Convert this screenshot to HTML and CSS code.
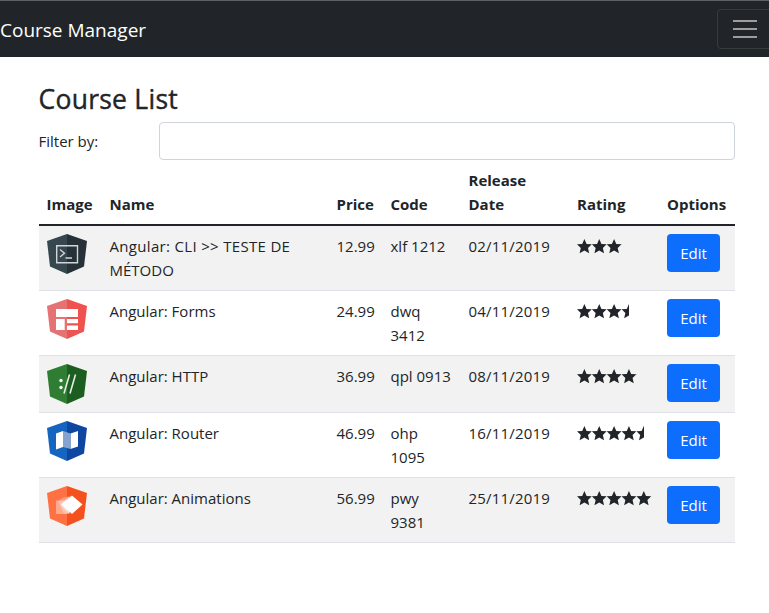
FILE: index.html
```html
<!DOCTYPE html>
<html lang="en">
<head>
<meta charset="utf-8">
<title>Course Manager</title>
<link rel="stylesheet" href="styles.css">
</head>
<body>
<svg width="0" height="0" class="defs" aria-hidden="true">
  <defs>
    <path id="star" d="M7.4 0 9.600 4.900 14.800 5.300 11 8.900 12.200 14.200 7.400 11.600 2.600 14.200 3.800 8.900 0 5.300 5.200 4.900Z"/>
    <g id="stars">
      <use href="#star"/><use href="#star" x="14.85"/><use href="#star" x="29.7"/><use href="#star" x="44.55"/><use href="#star" x="59.4"/>
    </g>
    <path id="left" d="M20 0 0 7 3 32.500 20 40Z"/>
    <path id="right" d="M20 0 40 7 37 32.500 20 40Z"/>
  </defs>
</svg>
<nav class="navbar">
  <a class="brand">Course Manager</a>
  <button class="toggler" aria-label="Menu"><span></span><span></span><span></span></button>
</nav>
<main class="container">
  <h3 class="title">Course List</h3>
  <div class="filter">
    <label for="filter">Filter by:</label>
    <input id="filter" type="text">
  </div>
  <table class="table">
    <colgroup><col class="c-image"><col class="c-name"><col class="c-price"><col class="c-code"><col class="c-date"><col class="c-rating"><col class="c-options"></colgroup>
    <thead>
      <tr><th>Image</th><th>Name</th><th>Price</th><th>Code</th><th>Release<br>Date</th><th>Rating</th><th>Options</th></tr>
    </thead>
    <tbody>
      <tr>
        <td><svg class="logo" viewBox="0 0 40 40"><use href="#left" fill="#37474f"/><use href="#right" fill="#263238"/><path d="M9.700 11.700h20.800v17H9.700z" fill="none" stroke="#d3d6d8" stroke-width="1.4"/><path d="m13 15.500 4.500 3.700-4.500 3.700M18.500 24h6.500" fill="none" stroke="#d3d6d8" stroke-width="1.300"/></svg></td>
        <td><span class="wide">Angular: CLI &gt;&gt; TESTE DE</span><br>MÉTODO</td><td>12.99</td><td>xlf 1212</td><td class="date">02/11/2019</td>
        <td><div class="stars s30"><svg viewBox="0 0 75 15"><use href="#stars"/></svg></div></td>
        <td><button class="btn">Edit</button></td>
      </tr>
      <tr>
        <td><svg class="logo" viewBox="0 0 40 40"><use href="#left" fill="#e57373"/><use href="#right" fill="#ef5350"/><path d="M9 10h22v8H9zM9 20h8.700v11H9zM20 20h11v4.300H20zM20 26.500h11V31H20z" fill="#fff"/></svg></td>
        <td>Angular: Forms</td><td>24.99</td><td>dwq<br>3412</td><td class="date">04/11/2019</td>
        <td><div class="stars s35"><svg viewBox="0 0 75 15"><use href="#stars"/></svg></div></td>
        <td><button class="btn">Edit</button></td>
      </tr>
      <tr>
        <td><svg class="logo" viewBox="0 0 40 40"><use href="#left" fill="#2e7d32"/><use href="#right" fill="#1b5e20"/><g fill="#fff"><circle cx="14" cy="16.500" r="1.700"/><circle cx="14" cy="23.500" r="1.700"/></g><path d="m22.500 10.500-5.500 19M28.500 10.500l-5.500 19" fill="none" stroke="#e4ece4" stroke-width="1.600"/></svg></td>
        <td>Angular: HTTP</td><td>36.99</td><td>qpl 0913</td><td class="date">08/11/2019</td>
        <td><div class="stars s40"><svg viewBox="0 0 75 15"><use href="#stars"/></svg></div></td>
        <td><button class="btn">Edit</button></td>
      </tr>
      <tr>
        <td><svg class="logo" viewBox="0 0 40 40"><use href="#left" fill="#1565c0"/><use href="#right" fill="#0d47a1"/><path d="m9 12.500 7-2.500v16l-7 2.500zM23.500 12.500l7.500-2.500V25.500l-7.500 2.500z" fill="#fff"/><path d="m16 10 7.500 2.500V28L16 26z" fill="#86a3d0"/></svg></td>
        <td>Angular: Router</td><td>46.99</td><td>ohp<br>1095</td><td class="date">16/11/2019</td>
        <td><div class="stars s45"><svg viewBox="0 0 75 15"><use href="#stars"/></svg></div></td>
        <td><button class="btn">Edit</button></td>
      </tr>
      <tr>
        <td><svg class="logo" viewBox="0 0 40 40"><use href="#left" fill="#ff7043"/><use href="#right" fill="#f4511e"/><g fill="#fff"><path d="M9 14.500h13.500V28H9z" opacity=".4"/><path d="m11 15 5.500-3.500L25 10v16l-8 2z" opacity=".3"/><path d="m13.500 18.500 8-8 8 8-8 9z" opacity=".5"/><path d="M25 9.500 35.500 18.500 25 28 14.500 18.500z"/></g></svg></td>
        <td>Angular: Animations</td><td>56.99</td><td>pwy<br>9381</td><td class="date">25/11/2019</td>
        <td><div class="stars s50"><svg viewBox="0 0 75 15"><use href="#stars"/></svg></div></td>
        <td><button class="btn">Edit</button></td>
      </tr>
    </tbody>
  </table>
</main>
</body>
</html>
```
FILE: styles.css
```css
* { box-sizing: border-box; }
body {
  margin: 0;
  background: #fff;
  color: #212529;
  font-family: "Open Sans", "Noto Sans", sans-serif;
  font-size: 15px;
  line-height: 24px;
  overflow: hidden;
}
.defs { display: block; }
.navbar {
  display: flex;
  align-items: center;
  justify-content: space-between;
  height: 57px;
  background: #212529;
  border-top: 1px solid #5c6164;
}
.brand { color: #fff; font-size: 19px; line-height: 30px; padding-top: 2px; }
.toggler {
  display: flex;
  flex-direction: column;
  align-items: center;
  justify-content: center;
  gap: 6px;
  flex: none;
  width: 56px;
  height: 40px;
  margin-right: -4px;
  padding: 0 0 1px;
  background: none;
  border: 1px solid #373b3e;
  border-radius: 4px;
}
.toggler span { width: 24px; height: 2px; background: #9b9d9f; }
.container { width: 696px; margin-left: 38.5px; padding-top: 25px; }
.title {
  margin: 0 0 6px;
  font-size: 26.5px;
  line-height: 34px;
  font-weight: 400;
  letter-spacing: 0.25px;
  -webkit-text-stroke: 0.4px #212529;
}
.filter { display: flex; align-items: center; height: 38px; }
.filter label { width: 120px; }
.filter input {
  width: 576px;
  height: 38px;
  border: 1px solid #ced4da;
  border-radius: 4px;
  background: #fff;
}
.table { width: 696px; table-layout: fixed; border-collapse: separate; border-spacing: 0; }
.c-image { width: 63px; }
.c-name { width: 227px; }
.c-price { width: 54px; }
.c-code { width: 78px; }
.c-date { width: 108.5px; }
.c-rating { width: 90px; }
.c-options { width: 75.5px; }
th, td { padding: 8px; text-align: left; vertical-align: top; white-space: nowrap; }
th { vertical-align: bottom; font-weight: 700; border-bottom: 2px solid #212529; }
td { border-bottom: 1px solid #dee2e6; }
tbody tr:nth-child(odd) { background: #f2f2f2; }
.wide { letter-spacing: 0.32px; }
.date { letter-spacing: 0.2px; }
.logo { display: block; width: 40px; height: 40px; }
.stars { height: 24px; padding-top: 5px; overflow: hidden; }
.stars svg { display: block; width: 75px; height: 15px; fill: #212529; }
.s30 { width: 45px; }
.s35 { width: 52px; }
.s40 { width: 60px; }
.s45 { width: 67px; }
.s50 { width: 75px; }
.btn {
  display: block;
  width: 53px;
  height: 38px;
  padding: 0;
  border: 0;
  border-radius: 4px;
  background: #0d6efd;
  color: #fff;
  font: inherit;
}
```
